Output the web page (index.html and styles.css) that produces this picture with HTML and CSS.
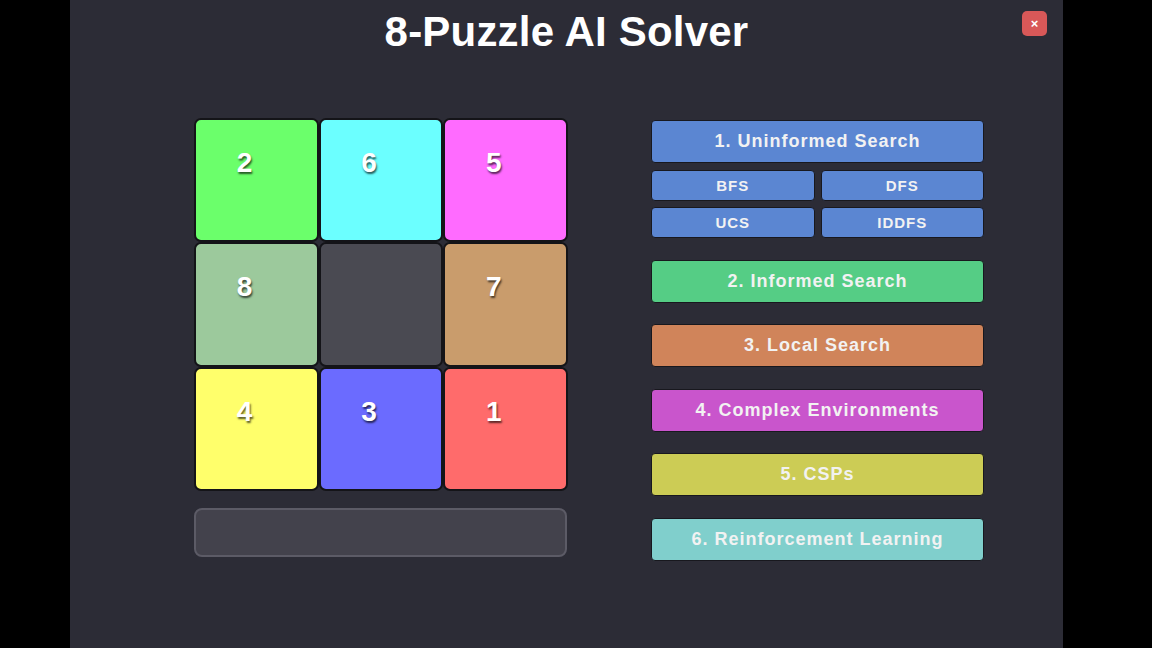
FILE: index.html
```html
<!DOCTYPE html>
<html>
<head>
<meta charset="utf-8">
<title>8-Puzzle AI Solver</title>
<link rel="stylesheet" href="styles.css">
</head>
<body>
<div class="app">
  <header class="header">
    <h1 class="title">8-Puzzle AI Solver</h1>
    <button class="close">×</button>
  </header>
  <main class="main">
    <section class="left">
      <div class="board">
        <div class="tile t-green"><span class="num">2</span></div>
        <div class="tile t-cyan"><span class="num">6</span></div>
        <div class="tile t-magenta"><span class="num">5</span></div>
        <div class="tile t-sage"><span class="num">8</span></div>
        <div class="tile t-blank"></div>
        <div class="tile t-tan"><span class="num">7</span></div>
        <div class="tile t-yellow"><span class="num">4</span></div>
        <div class="tile t-blue"><span class="num">3</span></div>
        <div class="tile t-red"><span class="num">1</span></div>
      </div>
      <div class="status"></div>
    </section>
    <section class="menu">
      <div class="group">
        <button class="btn b-blue">1. Uninformed Search</button>
        <div class="subgrid">
          <button class="sub b-blue">BFS</button>
          <button class="sub b-blue">DFS</button>
          <button class="sub b-blue">UCS</button>
          <button class="sub b-blue">IDDFS</button>
        </div>
      </div>
      <button class="btn b-green">2. Informed Search</button>
      <button class="btn b-orange">3. Local Search</button>
      <button class="btn b-magenta">4. Complex Environments</button>
      <button class="btn b-yellow">5. CSPs</button>
      <button class="btn b-teal">6. Reinforcement Learning</button>
    </section>
  </main>
</div>
</body>
</html>
```

FILE: styles.css
```css
* { box-sizing: border-box; }
html, body { margin: 0; padding: 0; }
body {
  background: #000;
  width: 1152px;
  height: 648px;
  overflow: hidden;
  font-family: "Liberation Sans", Arial, sans-serif;
}
.app {
  margin-left: 70px;
  width: 993px;
  height: 648px;
  background: #2c2c36;
  display: flex;
  flex-direction: column;
}
.header {
  position: relative;
  padding-top: 8px;
  height: 60px;
}
.title {
  margin: 0;
  text-align: center;
  color: #fff;
  font-size: 42px;
  line-height: 48px;
  font-weight: bold;
  letter-spacing: 0.2px;
}
.close {
  position: absolute;
  top: 11px;
  right: 16px;
  width: 25px;
  height: 25px;
  border: none;
  border-radius: 5px;
  background: #d85858;
  color: #fff;
  font-family: "Liberation Sans", Arial, sans-serif;
  font-weight: bold;
  font-size: 13px;
  line-height: 25px;
  padding: 0;
}
.main {
  display: flex;
  gap: 83px;
  padding-left: 124px;
  margin-top: 58px;
}
.left {
  width: 374px;
  display: flex;
  flex-direction: column;
}
.board {
  display: grid;
  grid-template-columns: repeat(3, 1fr);
  grid-template-rows: repeat(3, 1fr);
  width: 374px;
  height: 373px;
}
.tile {
  border: 2px solid #141418;
  border-radius: 7px;
  padding: 29px 0 0 28px;
}
.num {
  display: block;
  width: 41px;
  text-align: center;
  color: #fff;
  font-size: 28px;
  line-height: 28px;
  font-weight: bold;
  text-shadow: 1px 2px 2px rgba(0, 0, 0, 0.65);
}
.t-green { background: #6bff6b; }
.t-cyan { background: #6bffff; }
.t-magenta { background: #ff6bff; }
.t-sage { background: #9cc99c; }
.t-blank { background: #4a4a52; }
.t-tan { background: #c99c6c; }
.t-yellow { background: #ffff6b; }
.t-blue { background: #6b6bff; }
.t-red { background: #ff6b6b; }
.status {
  margin-top: 17px;
  width: 373px;
  height: 49px;
  background: #43424c;
  border: 2px solid #5c5b66;
  border-radius: 8px;
}
.menu {
  width: 333px;
  margin-top: 2px;
  display: flex;
  flex-direction: column;
  gap: 21.5px;
}
.group {
  display: flex;
  flex-direction: column;
  gap: 7px;
}
.subgrid {
  display: grid;
  grid-template-columns: 1fr 1fr;
  column-gap: 6px;
  row-gap: 6px;
}
.btn, .sub {
  font-family: "Liberation Sans", Arial, sans-serif;
  font-weight: bold;
  color: #f2f2f2;
  border: 1px solid #18181e;
  border-radius: 4px;
  letter-spacing: 1px;
  padding: 0;
  margin: 0;
}
.btn {
  height: 43px;
  font-size: 18px;
}
.sub {
  height: 31px;
  font-size: 15px;
}
.b-blue { background: #5b86d2; }
.b-green { background: #55cd85; }
.b-orange { background: #d0845a; }
.b-magenta { background: #c955cc; }
.b-yellow { background: #cccc55; }
.b-teal { background: #80cfcc; }
```
